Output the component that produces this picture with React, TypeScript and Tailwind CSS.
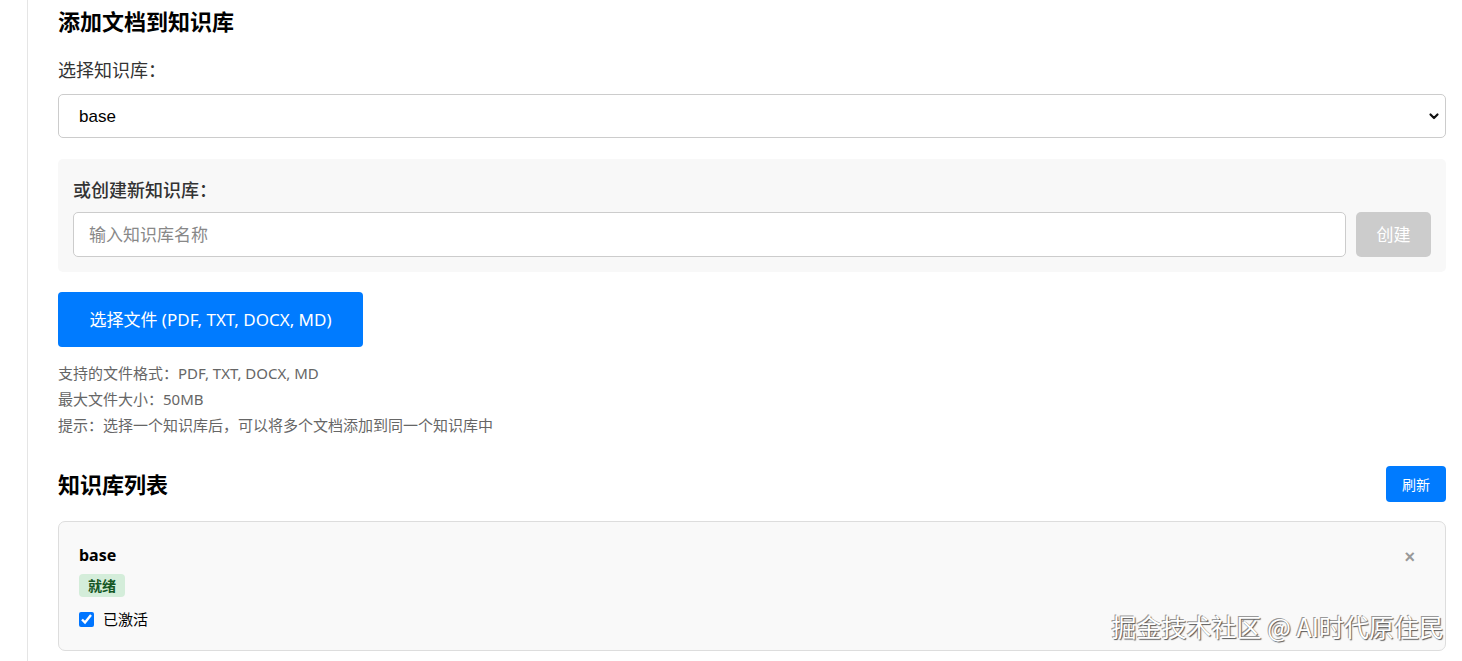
import { useState } from "react";

const font = "font-['Noto_Sans','Noto_Sans_CJK_SC','Microsoft_YaHei',sans-serif]";

export default function App() {
  const [kb, setKb] = useState("base");
  const [newName, setNewName] = useState("");
  const [active, setActive] = useState(true);

  return (
    <div className={`flex min-h-[661px] bg-white text-[#333] ${font}`}>
      <div className="w-[28px] shrink-0 border-r border-[#e5e5e5]" />
      <div className="relative flex-1 pl-[30px] pr-[16px] pt-[6px]">
        <h2 className="text-[22px] font-bold leading-[30px] text-black">添加文档到知识库</h2>

        <label className="mt-[20px] block text-[18px] leading-[28px] text-[#333]">选择知识库：</label>
        <div className="relative mt-[10px]">
          <select
            value={kb}
            onChange={(e) => setKb(e.target.value)}
            className="h-[44px] w-full appearance-none rounded-[5px] border border-[#ccc] bg-white px-[20px] pt-[2px] font-['Liberation_Sans',sans-serif] text-[17px] text-black outline-none"
          >
            <option value="base">base</option>
          </select>
          <svg
            className="pointer-events-none absolute right-[6px] top-1/2 -translate-y-1/2"
            width="12"
            height="12"
            viewBox="0 0 12 12"
          >
            <path d="M2.5 4.5 L6 8 L9.5 4.5" fill="none" stroke="#111" strokeWidth="2.2" strokeLinecap="round" strokeLinejoin="round" />
          </svg>
        </div>

        <div className="mt-[21px] rounded-[5px] bg-[#f8f8f8] px-[15px] pb-[15px] pt-[17px]">
          <label className="block text-[18px] font-medium leading-[28px] text-[#333]">或创建新知识库：</label>
          <div className="mt-[8px] flex gap-[10px]">
            <input
              value={newName}
              onChange={(e) => setNewName(e.target.value)}
              placeholder="输入知识库名称"
              className="h-[45px] flex-1 rounded-[5px] border border-[#ccc] bg-white px-[15px] text-[17px] outline-none placeholder:text-[#888]"
            />
            <button className="h-[45px] w-[75px] rounded-[5px] bg-[#ccc] text-[17px] text-white">创建</button>
          </div>
        </div>

        <button className="mt-[20px] h-[55px] w-[305px] rounded-[4px] bg-[#007bff] text-[17px] text-white">
          选择文件 (PDF, TXT, DOCX, MD)
        </button>

        <div className="mt-[13px] text-[15px] leading-[26px] text-[#666]">
          <p>支持的文件格式：PDF, TXT, DOCX, MD</p>
          <p>最大文件大小：50MB</p>
          <p>提示：选择一个知识库后，可以将多个文档添加到同一个知识库中</p>
        </div>

        <div className="mt-[28px] flex items-center justify-between">
          <h2 className="text-[22px] font-bold leading-[30px] text-black">知识库列表</h2>
          <button className="h-[36px] w-[60px] rounded-[4px] bg-[#007bff] text-[14px] text-white">刷新</button>
        </div>

        <div className="mt-[19px] flex items-start justify-between rounded-[7px] border border-[#ddd] bg-[#f9f9f9] px-[20px] pb-[20px] pt-[20px]">
          <div>
            <div className="text-[16px] font-bold leading-[26px] text-black">base</div>
            <span className="mt-[6px] inline-block rounded-[4px] bg-[#d4edda] px-[9px] text-[14px] font-bold leading-[23px] text-[#155724]">
              就绪
            </span>
            <label className="mt-[11px] flex items-center gap-[9px] text-[15px] leading-[22px] text-black">
              <input
                type="checkbox"
                checked={active}
                onChange={(e) => setActive(e.target.checked)}
                className="h-[15px] w-[15px] accent-[#0075ff]"
              />
              已激活
            </label>
          </div>
          <button className="mr-[10px] mt-[6px] font-['Liberation_Sans',sans-serif] text-[18px] font-bold leading-[18px] text-[#999]">
            ×
          </button>
        </div>

        <div className="pointer-events-none absolute bottom-[20px] right-[18px] font-['Noto_Sans_CJK_SC',sans-serif] text-[25px] leading-[30px] text-white [text-shadow:1px_1px_1px_#555,-1px_-1px_0_#999]">
          掘金技术社区 @ AI时代原住民
        </div>
      </div>
    </div>
  );
}
